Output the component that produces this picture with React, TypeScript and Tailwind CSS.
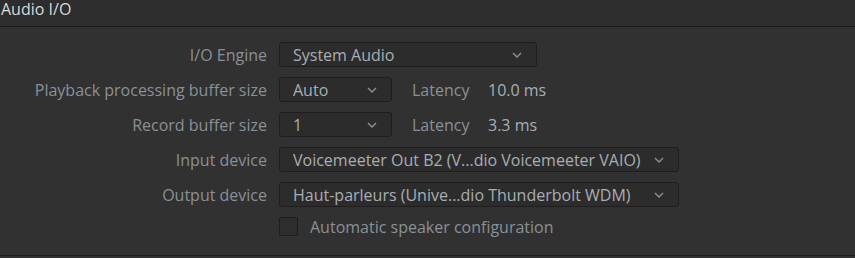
import type { ReactNode } from "react";

function Chevron() {
  return (
    <svg width="10" height="6" viewBox="0 0 10 6" className="shrink-0">
      <path d="M1 1l4 4 4-4" fill="none" stroke="#8d9095" strokeWidth="1.4" />
    </svg>
  );
}

function Select({ value, width }: { value: string; width: string }) {
  return (
    <div
      className={`flex h-[25px] ${width} items-center justify-between rounded-[3px] border border-[#1e1e1e] bg-[#2c2c2c] pl-[13px] pr-[14px] text-[#a9aeb4]`}
    >
      <span className="truncate">{value}</span>
      <Chevron />
    </div>
  );
}

function Row({ label, children, tall = true }: { label?: string; children: ReactNode; tall?: boolean }) {
  return (
    <div className={`flex items-center ${tall ? "h-[25px]" : "h-[19px]"}`}>
      <div className="w-[267px] shrink-0 text-right text-[#8a9097]">{label}</div>
      <div className="ml-[12px] flex items-center">{children}</div>
    </div>
  );
}

function Latency({ value }: { value: string }) {
  return (
    <>
      <span className="ml-[20px] w-[76px] text-[#8a9097]">Latency</span>
      <span className="text-[#a9aeb4]">{value}</span>
    </>
  );
}

export default function App() {
  return (
    <div
      className="h-[258px] w-[855px] bg-[#313131] text-[16px] leading-[22px]"
      style={{ fontFamily: '"Open Sans", "Noto Sans", sans-serif' }}
    >
      <div className="h-[27px] border-b border-[#1b1b1b] bg-[#2d2d2d] pl-px pt-px leading-[16px] text-[#d9d9d9]">
        Audio I/O
      </div>
      <div className="flex h-[229px] flex-col gap-[10px] border-b border-[#1e1e1e] pt-[15px]">
        <Row label="I/O Engine">
          <Select value="System Audio" width="w-[258px]" />
        </Row>
        <Row label="Playback processing buffer size">
          <Select value="Auto" width="w-[113px]" />
          <Latency value="10.0 ms" />
        </Row>
        <Row label="Record buffer size">
          <Select value="1" width="w-[113px]" />
          <Latency value="3.3 ms" />
        </Row>
        <Row label="Input device">
          <Select value="Voicemeeter Out B2 (V...dio Voicemeeter VAIO)" width="w-[400px]" />
        </Row>
        <Row label="Output device">
          <Select value="Haut-parleurs (Unive...dio Thunderbolt WDM)" width="w-[400px]" />
        </Row>
        <Row tall={false}>
          <div className="h-[19px] w-[19px] rounded-[2px] border border-[#1e1e1e] bg-[#2d2d2d]" />
          <span className="ml-[12px] text-[#8a9097]">Automatic speaker configuration</span>
        </Row>
      </div>
    </div>
  );
}
